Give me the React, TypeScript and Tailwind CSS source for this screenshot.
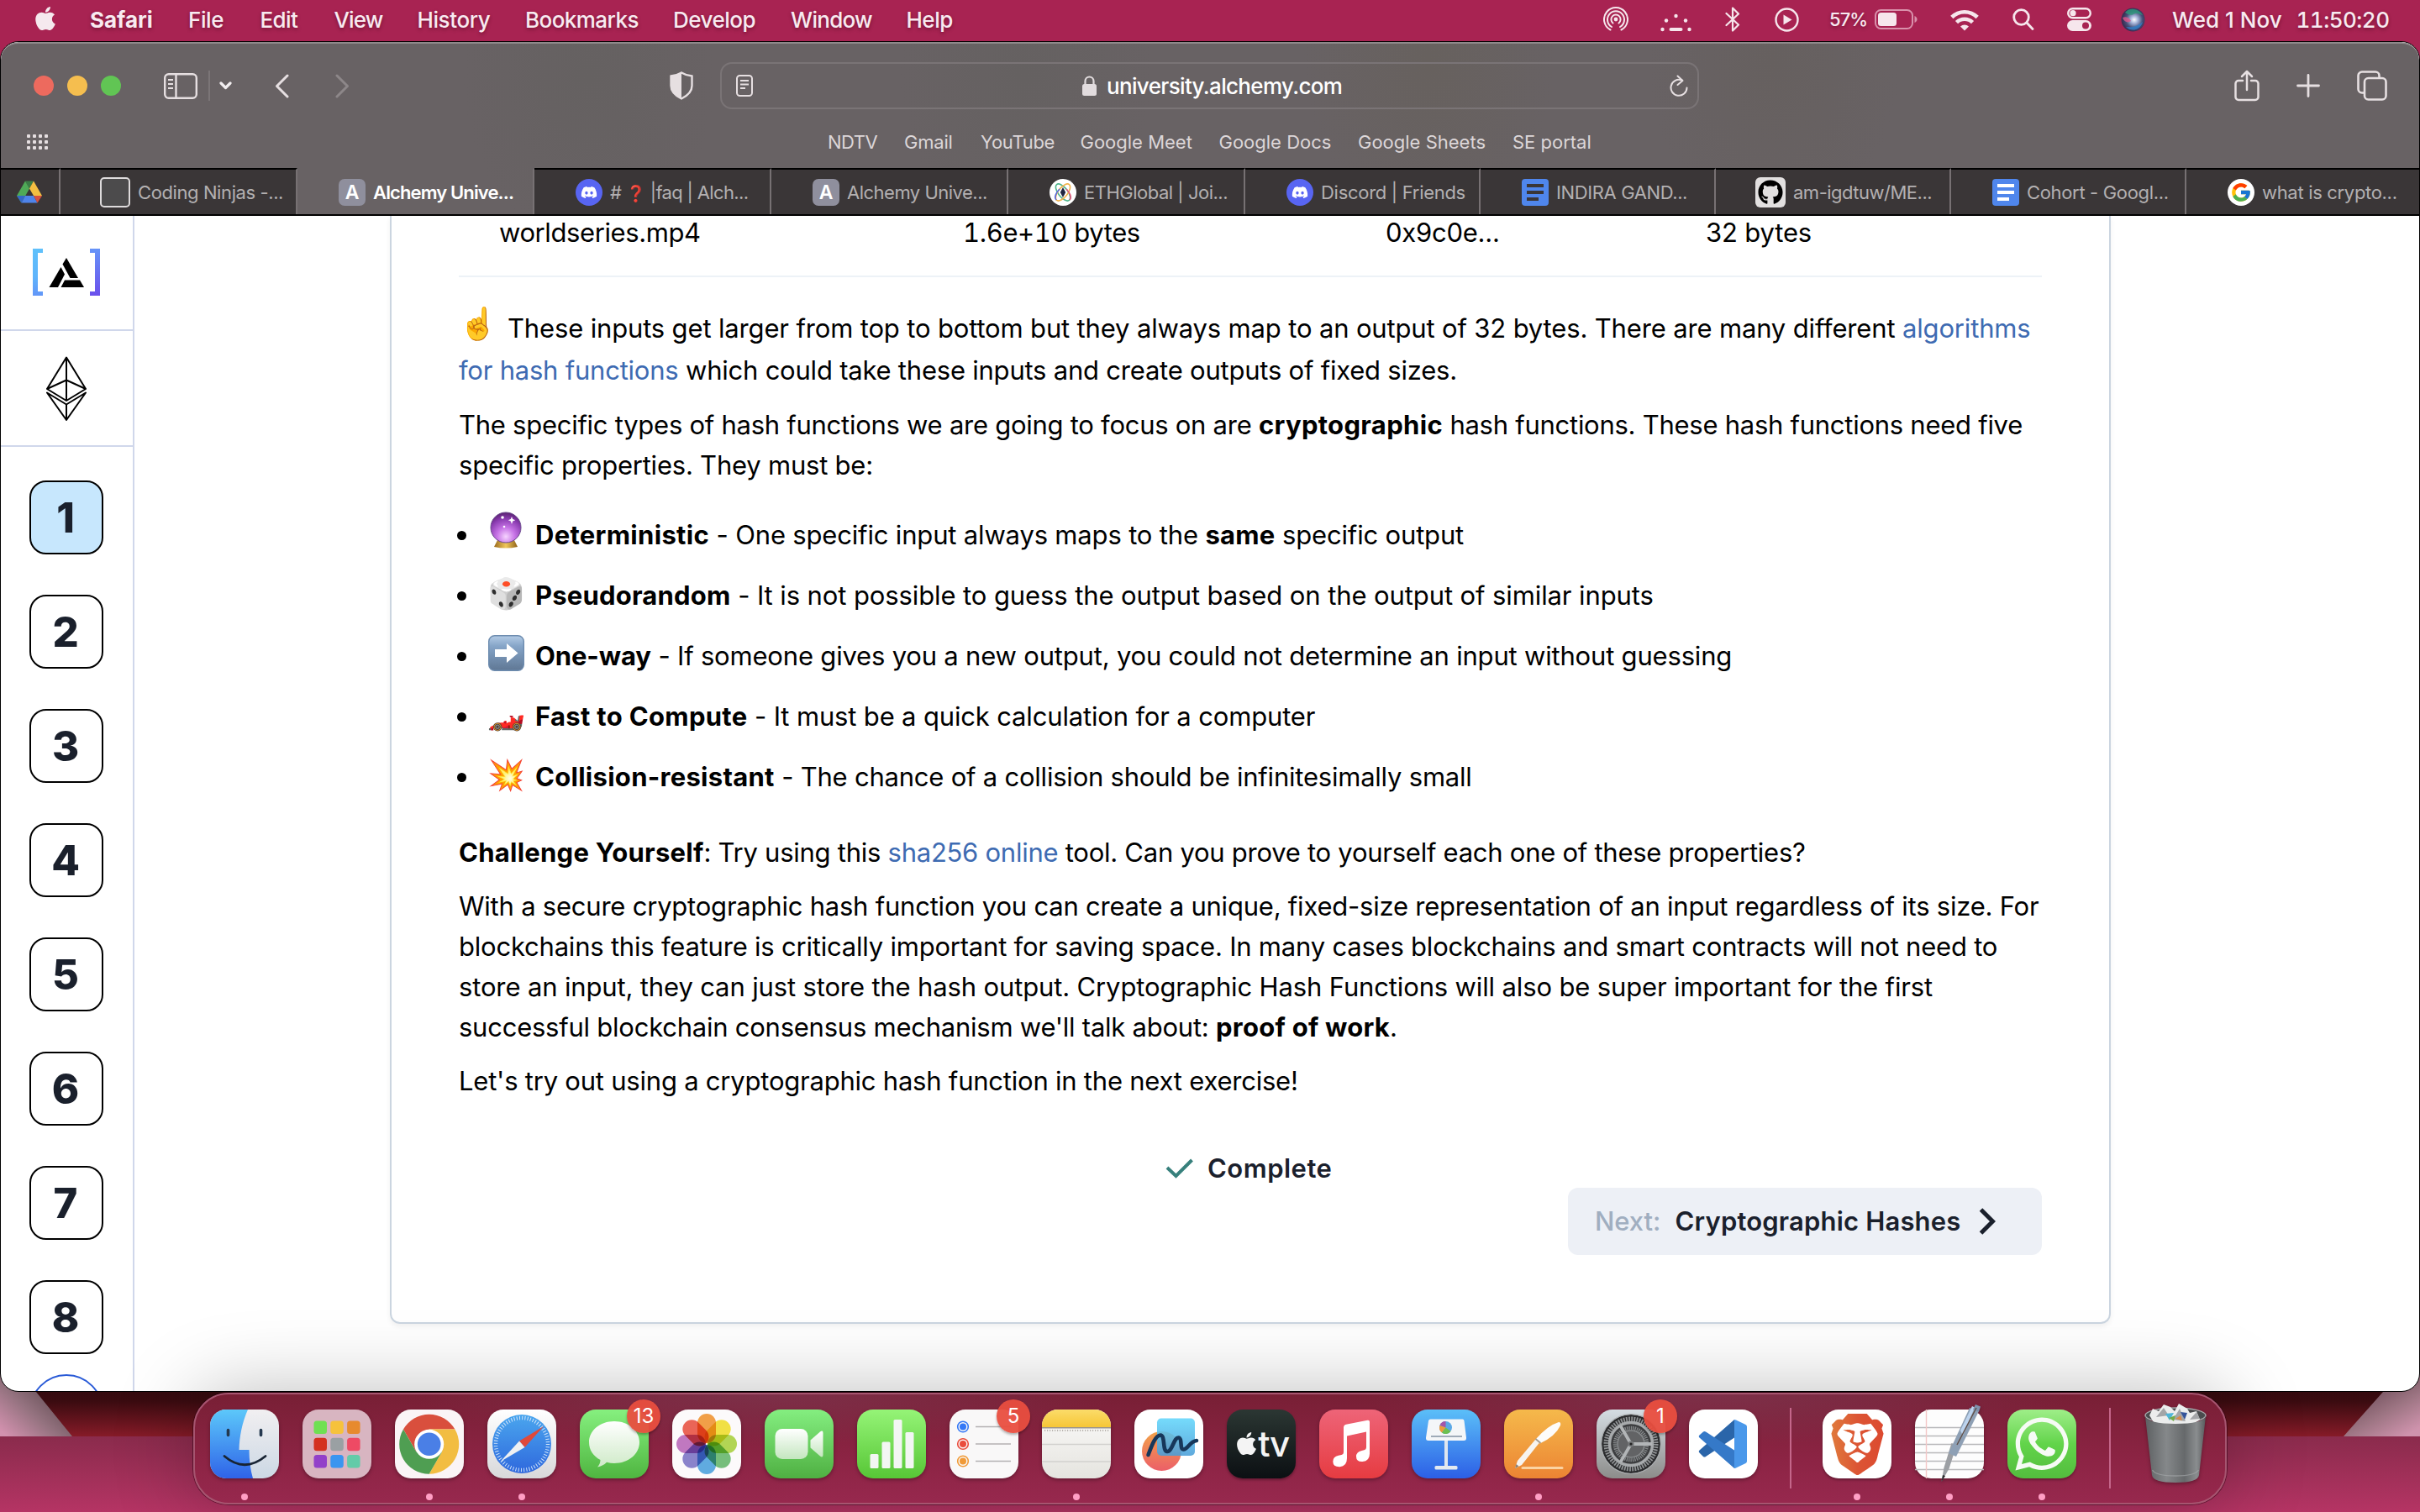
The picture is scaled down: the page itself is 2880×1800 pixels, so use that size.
import React from "react";
import type { ReactNode } from "react";
import { FaApple, FaDiscord, FaGithub, FaWhatsapp } from "react-icons/fa";
import { FcGoogle } from "react-icons/fc";
import { SiBrave } from "react-icons/si";

type Kids = { children?: ReactNode; className?: string };

/* ---------- Menu bar ---------- */

const menus: { label: string; cls: string }[] = [
  { label: "Safari", cls: "w-[117px] font-bold tracking-[0px]" },
  { label: "File", cls: "w-[85.5px] tracking-[-0.4px]" },
  { label: "Edit", cls: "w-[88px] tracking-[-0.6px]" },
  { label: "View", cls: "w-[99px] tracking-[-0.9px]" },
  { label: "History", cls: "w-[128.5px] tracking-[-0.4px]" },
  { label: "Bookmarks", cls: "w-[176px] tracking-[-0.55px]" },
  { label: "Develop", cls: "w-[140px] tracking-[-0.5px]" },
  { label: "Window", cls: "w-[137.5px] tracking-[-0.7px]" },
  { label: "Help", cls: "w-[80px] tracking-[-0.5px]" },
];

function Slot({ children, className = "" }: Kids) {
  return <div className={"flex h-full shrink-0 items-center " + className}>{children}</div>;
}

function MenuBar() {
  return (
    <div className="flex h-[46px] shrink-0 items-center text-[26px] font-medium whitespace-nowrap text-[#f8eaf0] [text-shadow:0_2px_4px_rgba(60,0,25,0.45)]">
      <Slot className="w-[107px] pl-[38px]">
        <FaApple className="mb-[2px] size-[32px] text-[#f5e9ee]" />
      </Slot>
      {menus.map((m) => (
        <span key={m.label} className={"shrink-0 " + m.cls}>
          {m.label}
        </span>
      ))}
      <div className="grow" />
      <Slot className="w-[68px]">
        <svg className="size-[30px]" viewBox="0 0 30 30" fill="none" stroke="#f6e6ec" strokeWidth="2" strokeLinecap="round">
          <circle cx="15" cy="15" r="2.4" fill="#f6e6ec" stroke="none" />
          <path d="M11.5 19.5a5.6 5.6 0 1 1 7 0" />
          <path d="M10 24a10 10 0 1 1 10 0" />
          <path d="M8.500 27.500a14 14 0 1 1 13 0" />
        </svg>
      </Slot>
      <Slot className="w-[77px]">
        <svg className="mt-[8px] h-[22px] w-[37px]" viewBox="0 0 37 22" fill="#f6e6ec">
          <circle cx="18.500" cy="3" r="2.200" />
          <circle cx="7" cy="8.500" r="2.200" />
          <circle cx="30" cy="8.500" r="2.200" />
          <circle cx="2.500" cy="19" r="2.200" />
          <circle cx="34.500" cy="19" r="2.200" />
          <rect x="10.500" y="17" width="16" height="4" rx="2" />
        </svg>
      </Slot>
      <Slot className="w-[59px]">
        <svg className="h-[30px] w-[18px]" viewBox="0 0 18 30" fill="none" stroke="#f6e6ec" strokeWidth="2.200" strokeLinejoin="round" strokeLinecap="round">
          <path d="M1.500 8l14.500 13.500L9 28.500V1.500l7 7L1.500 22" />
        </svg>
      </Slot>
      <Slot className="w-[65px]">
        <svg className="size-[29px]" viewBox="0 0 29 29">
          <circle cx="14.500" cy="14.500" r="13" fill="none" stroke="#f6e6ec" strokeWidth="2.400" />
          <path d="M10.500 8.500v12l10-6z" fill="#f6e6ec" />
        </svg>
      </Slot>
      <Slot className="w-[54px] text-[22px] tracking-[-0.9px]">57%</Slot>
      <Slot className="w-[90px]">
        <svg className="h-[24px] w-[51px]" viewBox="0 0 51 24">
          <rect x="1" y="1" width="44" height="22" rx="6.500" fill="none" stroke="#d991ab" strokeWidth="2" />
          <rect x="4" y="4" width="22" height="16" rx="3.500" fill="#f6e6ec" />
          <path d="M47.500 8v8c4-1.500 4-6.500 0-8z" fill="#d991ab" />
        </svg>
      </Slot>
      <Slot className="w-[74px]">
        <svg className="mt-[2px] h-[26px] w-[34px]" viewBox="0 0 34 26" fill="none" stroke="#f6e6ec" strokeWidth="4.600">
          <path d="M1.800 9.500a21.500 21.500 0 0 1 30.400 0" />
          <path d="M7.500 15.600a13.500 13.500 0 0 1 19 0" />
          <path d="M12 20.500a7.200 7.200 0 0 1 10 0l-5 5z" fill="#f6e6ec" stroke="none" />
        </svg>
      </Slot>
      <Slot className="w-[65px]">
        <svg className="size-[26px]" viewBox="0 0 26 26" fill="none" stroke="#f6e6ec" strokeWidth="2.800" strokeLinecap="round">
          <circle cx="10.500" cy="10.500" r="8.800" />
          <path d="M17 17l7 7.500" />
        </svg>
      </Slot>
      <Slot className="w-[64px]">
        <svg className="h-[28px] w-[29px]" viewBox="0 0 29 28">
          <rect x="1.200" y="1.200" width="26.600" height="11" rx="5.500" fill="none" stroke="#f6e6ec" strokeWidth="2.400" />
          <circle cx="7" cy="6.700" r="3.600" fill="#f6e6ec" />
          <rect x="0" y="15" width="29" height="13" rx="6.500" fill="#f6e6ec" />
          <circle cx="22" cy="21.500" r="4" fill="#a82352" />
        </svg>
      </Slot>
      <Slot className="w-[61px]">
        <svg className="size-[29px]" viewBox="0 0 29 29">
          <defs>
            <radialGradient id="siri" cx="0.55" cy="0.5" r="0.5">
              <stop offset="0" stopColor="#fff" />
              <stop offset="0.3" stopColor="#a9b8dc" />
              <stop offset="0.7" stopColor="#475079" />
              <stop offset="1" stopColor="#3b2f55" />
            </radialGradient>
          </defs>
          <circle cx="14.500" cy="14.500" r="14" fill="url(#siri)" />
          <path d="M5 6C9 0 21 0 26 9c-5-2-9-3-11-1-3 2-7 0-10-2z" fill="#2c9a7c" opacity="0.8" />
          <path d="M2 12c4-2 8 0 10 4-4 3-8 1-10-4z" fill="#e0568c" opacity="0.8" />
          <path d="M6 23c6 1 13 0 20-6-2 9-13 13-20 6z" fill="#2f7fc9" opacity="0.8" />
        </svg>
      </Slot>
      <Slot className="w-[147.500px]">Wed 1 Nov</Slot>
      <Slot className="w-[147.500px] tracking-[-0.500px] tabular-nums">11:50:20</Slot>
    </div>
  );
}

/* ---------- Safari toolbar ---------- */

const favourites: { label: string; cls: string }[] = [
  { label: "NDTV", cls: "w-[91px] tracking-[-0.5px]" },
  { label: "Gmail", cls: "w-[91px] tracking-[-0.2px]" },
  { label: "YouTube", cls: "w-[118.500px] tracking-[-0.3px]" },
  { label: "Google Meet", cls: "w-[165px]" },
  { label: "Google Docs", cls: "w-[165.500px]" },
  { label: "Google Sheets", cls: "w-[184px]" },
  { label: "SE portal", cls: "w-[96px]" },
];

function Toolbar() {
  return (
    <>
      <div className="flex h-[100px] shrink-0 items-center">
        <div className="ml-[39px] flex gap-[16px]">
          <i className="size-[24px] rounded-full bg-[#ed6a5e]" />
          <i className="size-[24px] rounded-full bg-[#f5be4f]" />
          <i className="size-[24px] rounded-full bg-[#61c554]" />
        </div>
        <svg className="ml-[51px] h-[31px] w-[40px]" viewBox="0 0 40 31" fill="none" stroke="#e6dfe1" strokeWidth="2.400">
          <rect x="1.200" y="1.200" width="37.600" height="28.600" rx="4.500" />
          <path d="M14.500 1v29" />
          <path d="M5 8h6M5 13h6M5 18h6" strokeWidth="2" />
        </svg>
        <i className="ml-[13px] h-[36px] w-[2px] bg-[#7b7577]" />
        <svg className="ml-[11px] h-[10px] w-[15px]" viewBox="0 0 15 10" fill="none" stroke="#f2eef0" strokeWidth="3.200" strokeLinecap="round" strokeLinejoin="round">
          <path d="M2 2l5.500 5.500L13 2" />
        </svg>
        <svg className="ml-[51px] h-[29px] w-[17px]" viewBox="0 0 17 29" fill="none" stroke="#e6dfe1" strokeWidth="3" strokeLinecap="round" strokeLinejoin="round">
          <path d="M15 2L2.500 14.500 15 27" />
        </svg>
        <svg className="ml-[55px] h-[29px] w-[17px]" viewBox="0 0 17 29" fill="none" stroke="#8d8789" strokeWidth="3" strokeLinecap="round" strokeLinejoin="round">
          <path d="M2 2l12.500 12.500L2 27" />
        </svg>
        <svg className="ml-[381px] h-[34px] w-[28px]" viewBox="0 0 28 34">
          <path d="M14 1.500c4 2.500 7.500 3.500 12.500 4V17c0 7.500-5.500 12-12.500 15.500C7 29 1.500 24.500 1.500 17V5.500c5-.5 8.500-1.500 12.500-4z" fill="none" stroke="#e6dfe1" strokeWidth="2.400" />
          <path d="M14 1.500v31C7 29 1.500 24.500 1.500 17V5.500c5-.5 8.500-1.500 12.500-4z" fill="#e6dfe1" />
        </svg>
        <div className="ml-[32px] flex h-[56px] w-[1165px] items-center rounded-[14px] border-2 border-[#7a7476] pr-[11px] pl-[17px]">
          <svg className="h-[26px] w-[20px]" viewBox="0 0 20 26" fill="none" stroke="#e6dfe1" strokeWidth="2">
            <rect x="1" y="1" width="18" height="24" rx="3.500" />
            <path d="M5 7h10M5 11.500h10M5 16h6" />
          </svg>
          <svg className="ml-[392px] h-[24px] w-[17px]" viewBox="0 0 17 24">
            <rect x="0" y="10" width="17" height="14" rx="2.500" fill="#e2dcde" />
            <path d="M3.500 11V6.500a5 5 0 0 1 10 0V11" fill="none" stroke="#e2dcde" strokeWidth="2.200" />
          </svg>
          <span className="ml-[12px] grow text-[26px] font-medium tracking-[-0.660px] text-white">university.alchemy.com</span>
          <svg className="h-[26px] w-[22px]" viewBox="0 0 22 26" fill="none" stroke="#e6dfe1" strokeWidth="2" strokeLinecap="round" strokeLinejoin="round">
            <path d="M20.500 15.500a9.500 9.500 0 1 1-6-9" />
            <path d="M9.500 1.500l6 5.500-6 5" />
          </svg>
        </div>
        <svg className="ml-[637px] h-[38px] w-[30px]" viewBox="0 0 30 38" fill="none" stroke="#e6dfe1" strokeWidth="2.500" strokeLinecap="round" strokeLinejoin="round">
          <path d="M10 13H5a3.500 3.500 0 0 0-3.500 3.500v16A3.500 3.500 0 0 0 5 36h20a3.500 3.500 0 0 0 3.500-3.500v-16A3.500 3.500 0 0 0 25 13h-5" />
          <path d="M15 24V2M9 8l6-6 6 6" />
        </svg>
        <svg className="ml-[44px] size-[28px]" viewBox="0 0 28 28" stroke="#e6dfe1" strokeWidth="2.800" strokeLinecap="round">
          <path d="M14 1.500v25M1.500 14h25" />
        </svg>
        <svg className="ml-[44px] h-[36px] w-[36px]" viewBox="0 0 36 36" fill="none" stroke="#e6dfe1" strokeWidth="2.600">
          <rect x="9" y="9" width="25.500" height="25.500" rx="4.500" />
          <path d="M9 26.500H6a4.500 4.500 0 0 1-4.500-4.500V6A4.500 4.500 0 0 1 6 1.500h16A4.500 4.500 0 0 1 26.500 6v3" />
        </svg>
      </div>
      <div className="mb-[14px] flex h-[34px] shrink-0 items-center text-[22px] whitespace-nowrap text-[#dcd6d8]">
        <div className="ml-[31px] grid w-[25px] grid-cols-4 gap-x-[3px] gap-y-[3px]">
          {Array.from({ length: 12 }, (_, i) => (
            <i key={i} className="size-[4px] rounded-[1px] bg-[#e6dfe1]" />
          ))}
        </div>
        <div className="ml-[928px] flex">
          {favourites.map((f) => (
            <span key={f.label} className={f.cls}>
              {f.label}
            </span>
          ))}
        </div>
      </div>
    </>
  );
}

/* ---------- Tabs ---------- */

const DriveIcon = () => (
  <svg className="h-[28px] w-[30px]" viewBox="0 0 30 27">
    <path d="M10 0h10l-5 9z" fill="#3a7d45" />
    <path d="M10 0l5 9L5.500 26 0 17.500z" fill="#4faa57" />
    <path d="M20 0l10 17.500H20L15 9z" fill="#f3bf42" />
    <path d="M10 17.500h10L24.500 26h-19z" fill="#4f84ea" />
    <path d="M20 17.500h10L24.500 26z" fill="#d8513f" />
    <path d="M0 17.500L5.500 26 10 17.500z" fill="#3567c8" />
  </svg>
);

const LetterA = () => (
  <span className="flex size-[32px] items-center justify-center rounded-[7px] bg-[#8f8f9d] text-[23px] font-semibold text-white">A</span>
);

const DiscordIcon = () => (
  <span className="flex size-[32px] items-center justify-center rounded-full bg-[#5865f2] text-white">
    <FaDiscord className="size-[20px]" />
  </span>
);

const DocsIcon = () => (
  <svg className="size-[32px]" viewBox="0 0 32 32">
    <rect width="32" height="32" rx="4" fill="#4f86ec" />
    <path d="M6 8h20M6 16h20M6 24h14" stroke="#3a3637" strokeWidth="4" />
  </svg>
);

const DocsIconLight = () => (
  <svg className="size-[32px]" viewBox="0 0 32 32">
    <rect width="32" height="32" rx="4" fill="#4f86ec" />
    <path d="M6 8h20M6 16h20M6 24h14" stroke="#fff" strokeWidth="4" />
  </svg>
);

const EthGlobalIcon = () => (
  <svg className="size-[32px]" viewBox="0 0 32 32" fill="none" strokeWidth="1.6">
    <circle cx="16" cy="16" r="16" fill="#fff" />
    <ellipse cx="16" cy="16" rx="5.500" ry="12" transform="rotate(-38 16 16)" stroke="#4fb58c" />
    <ellipse cx="16" cy="16" rx="5.500" ry="12" transform="rotate(38 16 16)" stroke="#f0b24a" />
    <path d="M8 25c-3-3 0-9 4-13" stroke="#5468e0" />
    <path d="M24 25c3-3 0-9-4-13" stroke="#e0567a" />
    <path d="M16 10l3.200 6-3.200 6-3.200-6z" fill="#1f2540" />
  </svg>
);

const tabs: { label: ReactNode; icon: ReactNode; cls: string; text?: string; active?: boolean }[] = [
  { label: "Coding Ninjas -...", icon: <span className="-ml-[2px] size-[36px] rounded-[5px] border-2 border-[#dedbdc] bg-[#4c4b4c]" />, cls: "w-[282px]", text: "tracking-[-0.4px]" },
  { label: "Alchemy Unive...", icon: <LetterA />, cls: "w-[282px]", text: "tracking-[-0.87px]", active: true },
  {
    label: (
      <>
        # <span className="text-[19px]">❓</span> |faq | Alch...
      </>
    ),
    icon: <DiscordIcon />,
    cls: "w-[282px]",
    text: "tracking-[-0.65px]",
  },
  { label: "Alchemy Unive...", icon: <LetterA />, cls: "w-[282px]", text: "tracking-[-0.5px]" },
  { label: "ETHGlobal | Joi...", icon: <EthGlobalIcon />, cls: "w-[282px]", text: "tracking-[-0.49px]" },
  { label: "Discord | Friends", icon: <DiscordIcon />, cls: "w-[280px]", text: "tracking-[-0.29px]" },
  { label: "INDIRA GAND...", icon: <DocsIcon />, cls: "w-[280px]", text: "tracking-[-0.38px]" },
  {
    label: "am-igdtuw/ME...",
    icon: (
      <span className="-ml-[2px] flex size-[36px] items-center justify-center rounded-[6px] bg-[#e2e0e0]">
        <FaGithub className="size-[30px] text-black" />
      </span>
    ),
    cls: "w-[280px]",
    text: "tracking-[-0.5px]",
  },
  { label: "Cohort - Googl...", icon: <DocsIconLight />, cls: "w-[280px]", text: "tracking-[-0.34px]" },
  {
    label: "what is crypto...",
    icon: (
      <span className="flex size-[32px] items-center justify-center rounded-full bg-white">
        <FcGoogle className="size-[26px]" />
      </span>
    ),
    cls: "w-[280px]",
    text: "tracking-[-0.32px]",
  },
];

function TabBar() {
  return (
    <div className="flex h-[57px] shrink-0 overflow-hidden border-b-2 border-black text-[22px] whitespace-nowrap">
      <div className="flex w-[71px] shrink-0 items-center border-t-2 border-r-2 border-t-black border-r-[#777173] bg-[#3a3637] pt-[1px] pl-[19px]">
        <DriveIcon />
      </div>
      {tabs.map((t, i) => (
        <div
          key={i}
          className={
            "flex shrink-0 items-center border-t-2 border-r-2 border-r-[#777173] pt-[1px] pl-[49px] " +
            t.cls +
            (t.active ? " border-t-transparent font-semibold text-white" : " border-t-black bg-[#3a3637] text-[#b3b0b1]")
          }
        >
          {t.icon}
          <span className={"ml-[9px] " + (t.text ?? "")}>{t.label}</span>
        </div>
      ))}
    </div>
  );
}

/* ---------- Course sidebar ---------- */

function Sidebar() {
  return (
    <div className="flex w-[160px] shrink-0 flex-col overflow-hidden border-r-2 border-[#d0d7eb]">
      <div className="flex h-[137px] shrink-0 justify-center border-b-2 border-[#d0d7eb] pt-[39px]">
        <svg className="h-[56px] w-[80px]" viewBox="0 0 80 56">
          <defs>
            <linearGradient id="bl" x1="0" y1="0" x2="0" y2="1">
              <stop offset="0" stopColor="#5fc1fb" />
              <stop offset="0.600" stopColor="#5fb4fb" />
              <stop offset="1" stopColor="#6296f8" />
            </linearGradient>
            <linearGradient id="br" x1="0" y1="0" x2="0" y2="1">
              <stop offset="0" stopColor="#6694f8" />
              <stop offset="1" stopColor="#6a4fec" />
            </linearGradient>
          </defs>
          <path d="M0 0h12v5H6v46h6v5H0z" fill="url(#bl)" />
          <path d="M80 0H68v5h6v46h-6v5h12z" fill="url(#br)" />
          <path d="M40 11l14 24H44.500L35.500 18.500z" fill="#000" />
          <path d="M33.500 22l4.500 8.500-8 15.500H19.500z" fill="#000" />
          <path d="M38 37.500h18l5 8.500H33.500z" fill="#000" />
        </svg>
      </div>
      <div className="flex h-[138px] shrink-0 justify-center border-b-2 border-[#d0d7eb] pt-[30px]">
        <svg className="h-[77px] w-[48px]" viewBox="0 0 48 77" fill="none" stroke="#000" strokeWidth="2" strokeLinejoin="round">
          <path d="M24 1.500L47 39 24 53 1 39z" />
          <path d="M24 1.500V53M1 39l23-10.500L47 39" />
          <path d="M1 43.500L24 57.500l23-14L24 76z" />
          <path d="M24 57.500V76" />
        </svg>
      </div>
      <div className="flex flex-col items-center gap-[48px] pt-[40px]">
        {[1, 2, 3, 4, 5, 6, 7, 8].map((n) => (
          <div
            key={n}
            className={
              "flex size-[88px] shrink-0 items-center justify-center rounded-[20px] border-2 border-black pt-[2px] pr-[2px] text-[49px] font-extrabold text-[#1a202c] " +
              (n === 1 ? "bg-[#c7e7fd]" : "bg-white")
            }
          >
            {n}
          </div>
        ))}
      </div>
      <div className="mt-[24px] size-[88px] shrink-0 self-center rounded-full border-2 border-[#2a5bd7]" />
    </div>
  );
}

/* ---------- Lesson ---------- */

const Crystal = () => (
  <svg className="mb-[12px] h-[44px] w-[38px]" viewBox="0 0 38 44">
    <defs>
      <radialGradient id="orb" cx="0.5" cy="0.800" r="0.850">
        <stop offset="0" stopColor="#f6d4ff" />
        <stop offset="0.350" stopColor="#c774e6" />
        <stop offset="0.700" stopColor="#8a3bb0" />
        <stop offset="1" stopColor="#4d1a5f" />
      </radialGradient>
      <linearGradient id="orbBase">
        <stop offset="0" stopColor="#9a6a1c" />
        <stop offset="0.500" stopColor="#f0c75a" />
        <stop offset="1" stopColor="#8f6218" />
      </linearGradient>
    </defs>
    <path d="M9 34h20l4 8q-14 3-28 0z" fill="url(#orbBase)" />
    <circle cx="19" cy="19" r="18" fill="url(#orb)" stroke="#6a4a8c" strokeWidth="1" />
    <circle cx="15" cy="7" r="1.800" fill="#fff" />
    <path d="M26 6l1.200 3 3 1.200-3 1.200L26 15l-1.200-3.600-3-1.200 3-1.200z" fill="#fff" />
    <circle cx="17" cy="18" r="1.300" fill="#fff" />
  </svg>
);

const ArrowTile = () => (
  <svg className="mb-[8px] size-[43px]" viewBox="0 0 43 43">
    <defs>
      <linearGradient id="tile" x1="0" y1="0" x2="0" y2="1">
        <stop offset="0" stopColor="#b4cce6" />
        <stop offset="0.300" stopColor="#86a5c8" />
        <stop offset="1" stopColor="#5f7794" />
      </linearGradient>
    </defs>
    <rect x="0.700" y="0.700" width="41.600" height="41.600" rx="7" fill="url(#tile)" stroke="#6d8caf" strokeWidth="1.400" />
    <path d="M8 17h14v-7l13.500 11.500L22 33v-7H8z" fill="#fff" />
  </svg>
);

const Bold = ({ children, className = "" }: Kids) => <b className={"font-bold tracking-[0.250px] " + className}>{children}</b>;
const Link = ({ children }: Kids) => <a className="text-[#3e6bb2]">{children}</a>;
const Line = ({ children, className = "tracking-[-0.220px]" }: Kids) => <span className={"block " + className}>{children}</span>;

const properties: { icon: ReactNode; name: string; name_cls: string; text: ReactNode; cls: string }[] = [
  {
    icon: <Crystal />,
    name: "Deterministic",
    name_cls: "tracking-[0.310px]",
    cls: "tracking-[-0.170px]",
    text: (
      <>
        - One specific input always maps to the <Bold className="tracking-[0.1px]">same</Bold> specific output
      </>
    ),
  },
  { icon: <span className="mb-[6px]">🎲</span>, name: "Pseudorandom", name_cls: "tracking-[0.200px]", cls: "tracking-[-0.100px]", text: "- It is not possible to guess the output based on the output of similar inputs" },
  { icon: <ArrowTile />, name: "One-way", name_cls: "tracking-[-0.100px]", cls: "tracking-[-0.190px]", text: "- If someone gives you a new output, you could not determine an input without guessing" },
  { icon: <span className="mb-[6px]">🏎️</span>, name: "Fast to Compute", name_cls: "tracking-[0.320px]", cls: "tracking-[-0.160px]", text: "- It must be a quick calculation for a computer" },
  { icon: <span className="mb-[6px]">💥</span>, name: "Collision-resistant", name_cls: "tracking-[0.280px]", cls: "tracking-[-0.220px]", text: "- The chance of a collision should be infinitesimally small" },
];

function Lesson() {
  return (
    <div className="ml-[304px] flex h-[1319px] w-[2048px] shrink-0 flex-col rounded-b-[12px] border-2 border-t-0 border-[#cbd5e0] px-[80px] text-[31px] leading-[48px] whitespace-nowrap text-black shadow-[0_3px_6px_rgba(0,0,0,0.06)]">
      <div className="-mt-[5px] grid h-[78px] shrink-0 grid-cols-[552px_503px_381px_1fr] border-b-2 border-[#edf2f7] pt-[1px] pl-[48px]">
        <span className="tracking-[-0.400px]">worldseries.mp4</span>
        <span className="tracking-[-0.380px] tabular-nums">1.6e+10 bytes</span>
        <span className="tracking-[-0.250px]">0x9c0e...</span>
        <span className="tracking-[-0.160px]">32 bytes</span>
      </div>
      <p className="mt-[36px] leading-[50px]">
        <span className="flex tracking-[-0.155px]">
          <span className="-mt-[6px] inline-block w-[58px] text-[37px] tracking-normal">☝️</span>
          <span>
            These inputs get larger from top to bottom but they always map to an output of 32 bytes. There are many different <Link>algorithms</Link>
          </span>
        </span>
        <Line>
          <Link>for hash functions</Link> which could take these inputs and create outputs of fixed sizes.
        </Line>
      </p>
      <p className="mt-[16px]">
        <Line className="tracking-[-0.265px]">
          The specific types of hash functions we are going to focus on are <Bold className="tracking-[0.320px]">cryptographic</Bold> hash functions. These hash functions need five
        </Line>
        <Line>specific properties. They must be:</Line>
      </p>
      <ul className="mt-[35px] flex flex-col gap-[24px]">
        {properties.map((p) => (
          <li key={p.name} className="flex h-[48px] items-center">
            <i className="-ml-[2px] size-[11px] rounded-full bg-black" />
            <span className="mr-[11px] ml-[23px] flex w-[48px] items-center justify-center text-[36px]">{p.icon}</span>
            <span className={p.cls}>
              <b className={"font-bold " + p.name_cls}>{p.name}</b> {p.text}
            </span>
          </li>
        ))}
      </ul>
      <p className="mt-[42px]">
        <Line className="tracking-[-0.260px]">
          <Bold className="tracking-[0.120px]">Challenge Yourself</Bold>: Try using this <Link>sha256 online</Link> tool. Can you prove to yourself each one of these properties?
        </Line>
      </p>
      <p className="mt-[16px]">
        <Line>With a secure cryptographic hash function you can create a unique, fixed-size representation of an input regardless of its size. For</Line>
        <Line className="tracking-[-0.210px]">blockchains this feature is critically important for saving space. In many cases blockchains and smart contracts will not need to</Line>
        <Line className="tracking-[-0.140px]">store an input, they can just store the hash output. Cryptographic Hash Functions will also be super important for the first</Line>
        <Line className="tracking-[-0.240px]">
          successful blockchain consensus mechanism we'll talk about: <Bold>proof of work</Bold>.
        </Line>
      </p>
      <p className="mt-[16px]">
        <Line>Let's try out using a cryptographic hash function in the next exercise!</Line>
      </p>
      <div className="mt-[56px] flex items-center pl-[841px] font-semibold text-[#1a202c]">
        <svg className="mr-[16px] h-[24px] w-[34px]" viewBox="0 0 34 24" fill="none" stroke="#37807c" strokeWidth="4">
          <path d="M2 11l10.500 10L31.500 2" />
        </svg>
        <span className="tracking-[0.500px]">Complete</span>
      </div>
      <div className="-mt-[1px] flex h-[80px] w-[564px] items-center self-end rounded-[12px] bg-[#edf0f6] pl-[32px] font-semibold">
        <span className="w-[95.500px] font-medium tracking-[-0.100px] text-[#a0aec0]">Next:</span>
        <span className="tracking-[0.170px] text-[#1a202c]">Cryptographic Hashes</span>
        <svg className="ml-[22px] h-[32px] w-[20px]" viewBox="0 0 20 32" fill="none" stroke="#1a202c" strokeWidth="5">
          <path d="M2.500 2l14 14-14 14" />
        </svg>
      </div>
    </div>
  );
}

/* ---------- Dock ---------- */

const g = (id: string, a: string, b: string) => (
  <linearGradient id={id} x1="0" y1="0" x2="0" y2="1">
    <stop offset="0" stopColor={a} />
    <stop offset="1" stopColor={b} />
  </linearGradient>
);

function Tile({ children, fill }: { children?: ReactNode; fill: string }) {
  return (
    <svg className="size-[82px] overflow-visible drop-shadow-[0_2px_2px_rgba(0,0,0,0.3)]" viewBox="0 0 82 82">
      <rect width="82" height="82" rx="19" fill={fill} />
      {children}
    </svg>
  );
}

const Finder = () => (
  <Tile fill="url(#fdR)">
    <defs>
      {g("fdL", "#5cc8fa", "#2f63e8")}
      {g("fdR", "#f1eff1", "#ccd8e4")}
    </defs>
    <path d="M19 0H45C38 16 35 32 34.500 48H46.500C46.500 60 48 72 51 82H19A19 19 0 0 1 0 63V19A19 19 0 0 1 19 0z" fill="url(#fdL)" />
    <path d="M21.500 24.500v6M60.500 24.500v6" stroke="#24384f" strokeWidth="3.600" strokeLinecap="round" />
    <path d="M17 55.500Q41 76 66 55.500" fill="none" stroke="#182433" strokeWidth="2.800" strokeLinecap="round" />
  </Tile>
);

const padColors = ["#6fe052", "#f6c23c", "#e78a2e", "#d4301f", "#9aa0a3", "#ee4a64", "#9240c9", "#3a95f0", "#63cba8"];
const Launchpad = () => (
  <Tile fill="#d8b5c1">
    {padColors.map((c, i) => (
      <rect key={c} x={13.500 + (i % 3) * 19.800} y={13.500 + Math.floor(i / 3) * 20.200} width="15.500" height="15.500" rx="3.500" fill={c} />
    ))}
  </Tile>
);

const Chrome = () => (
  <Tile fill="#faf4f6">
    <path d="M10 23.500A35.500 35.500 0 0 1 71.400 23.500H40.700L25.300 50.200z" fill="#d94f3d" />
    <path d="M71.400 23.500A35.500 35.500 0 0 1 40.700 76.800L56 50.200 40.700 23.500z" fill="#f2bd42" />
    <path d="M40.700 76.800A35.500 35.500 0 0 1 10 23.500L25.300 50.200H56z" fill="#4f9e52" />
    <circle cx="40.700" cy="41.300" r="17.500" fill="#fff" />
    <circle cx="40.700" cy="41.300" r="13.800" fill="#4a7fe6" />
  </Tile>
);

const Safari = () => (
  <Tile fill="url(#sfB)">
    <defs>
      {g("sfB", "#ffffff", "#d8d8da")}
      {g("sfC", "#4aa6ee", "#2f68dd")}
    </defs>
    <circle cx="41" cy="41" r="35" fill="url(#sfC)" />
    <circle cx="41" cy="41" r="31" fill="none" stroke="#cfe4fa" strokeWidth="4.500" strokeDasharray="1 2.246" />
    <path d="M67 20L44.500 45 38 37.500z" fill="#e0493b" />
    <path d="M15.500 62L38 37.500l6.500 7.500z" fill="#eef0f3" />
  </Tile>
);

const Messages = () => (
  <Tile fill="url(#msB)">
    <defs>
      {g("msB", "#86f07f", "#4fb540")}
      {g("msW", "#ffffff", "#cfeac8")}
    </defs>
    <path d="M41 14c17 0 30 11 30 25S58 64 41 64c-3 0-6-.4-9-1.200C29 66 25 68 21 68.500c2-2 3.500-5 3.500-8.500C16 55.500 11 48 11 39c0-14 13-25 30-25z" fill="url(#msW)" />
  </Tile>
);

const petals = ["#f0922e", "#f0dc2a", "#a8d03c", "#63b56a", "#4a9fdc", "#7a72c4", "#b865b8", "#e8503f"];
const Photos = () => (
  <Tile fill="#fcfafb">
    <g style={{ isolation: "isolate" }}>
      {petals.map((c, i) => (
        <rect key={c} x="30" y="5" width="22" height="35" rx="11" fill={c} opacity="0.880" transform={`rotate(${i * 45} 41 41)`} className="mix-blend-multiply" />
      ))}
    </g>
  </Tile>
);

const FaceTime = () => (
  <Tile fill="url(#ftB)">
    <defs>
      {g("ftB", "#84ee80", "#4fb042")}
      {g("ftW", "#ffffff", "#c4e6bf")}
    </defs>
    <rect x="12.500" y="23" width="39" height="36" rx="8.500" fill="url(#ftW)" />
    <path d="M54.500 36.500L66 26.500q3.500-2.500 3.500 1.500v26q0 4-3.500 1.500l-11.500-10z" fill="url(#ftW)" />
  </Tile>
);

const Numbers = () => (
  <Tile fill="url(#nbB)">
    <defs>{g("nbB", "#95f477", "#57c636")}</defs>
    <rect x="15.500" y="53" width="10" height="17" rx="1.500" fill="#f3f6f3" />
    <rect x="29.500" y="38.500" width="10" height="31.500" rx="1.500" fill="#f3f6f3" />
    <rect x="43.500" y="12" width="10" height="58" rx="1.500" fill="#f3f6f3" />
    <rect x="57.500" y="27" width="10" height="43" rx="1.500" fill="#f3f6f3" />
  </Tile>
);

const Reminders = () => (
  <Tile fill="#f9f8f8">
    {["#3478f6", "#ea4d3d", "#f09a37"].map((c, i) => (
      <g key={c}>
        <circle cx="16" cy={20.500 + i * 20.500} r="6.300" fill="none" stroke={c} strokeWidth="1.600" />
        <circle cx="16" cy={20.500 + i * 20.500} r="4" fill={c} />
        <path d={`M31 ${20.500 + i * 20.500}h42`} stroke="#b4b1b2" strokeWidth="1.400" />
      </g>
    ))}
  </Tile>
);

const Notes = () => (
  <Tile fill="url(#ntB)">
    <defs>
      {g("ntB", "#fbfaf9", "#e5e4df")}
      {g("ntY", "#fbdc6a", "#f6c637")}
    </defs>
    <path d="M0 21V19A19 19 0 0 1 19 0H63A19 19 0 0 1 82 19V21z" fill="url(#ntY)" />
    <path d="M0 21.800h82" stroke="#9a948c" strokeWidth="1.600" />
    <path d="M3 25h77" stroke="#b9b5b0" strokeWidth="2" strokeDasharray="1.200 1.800" />
    <path d="M0 41.500h82M0 62h82" stroke="#d2d1ce" strokeWidth="1.400" />
  </Tile>
);

const Freeform = () => (
  <Tile fill="#ffffff">
    <defs>
      {g("ffO", "#f2a24a", "#ec5f68")}
      {g("ffC", "#62d6fb", "#4a9ed8")}
    </defs>
    <circle cx="32.500" cy="49.500" r="23.500" fill="url(#ffO)" />
    <rect x="27" y="10.500" width="45" height="44.500" rx="5" fill="url(#ffC)" opacity="0.880" />
    <path d="M16.500 54C21 42 25 31 31 30.500c6 0 2 19 8 19.500s8-17 13.500-16.500c5 .5 1 14 6 14S66 38 74 37" fill="none" stroke="#17375a" strokeWidth="4.600" strokeLinecap="round" />
  </Tile>
);

const AppleTV = () => (
  <div className="flex size-[82px] items-center justify-center rounded-[19px] bg-linear-to-b from-[#2b3733] to-[#0c1013] text-[42px] leading-none font-medium text-[#f4f4f4] shadow-[0_2px_3px_rgba(0,0,0,0.3)]">
    <FaApple className="mb-[2px] size-[31px] shrink-0" />
    <span className="-ml-[2px] tracking-[-1.5px]">tv</span>
  </div>
);

const Music = () => (
  <Tile fill="url(#muB)">
    <defs>{g("muB", "#ee6478", "#e63b41")}</defs>
    <path d="M29 21.500q0-3 3-3.800l25.500-5q2.500-.4 2.500 2V52.500q0 9-8.500 9.500-7.500.3-7.500-6 0-5.500 6.500-7l3-.7q2.500-.6 2.500-3V26.500L33 31.500V58q0 9.500-8.500 10.200-8 .3-8.200-6.200 0-5.800 6.500-7.200l3.700-.9q2.500-.6 2.500-3z" fill="#fff" />
  </Tile>
);

const Keynote = () => (
  <Tile fill="url(#knB)">
    <defs>{g("knB", "#5bbff8", "#2c5fe6")}</defs>
    <path d="M39 36h4v32h-4z" fill="#dfe6ef" />
    <rect x="27.500" y="67" width="27" height="4.500" rx="1.500" fill="#e4e9f0" />
    <path d="M22.500 11.500h38q1.800 0 2 2L65 33.500q.3 3.500-3 3.500H20q-3.300 0-3-3.500l3-20q.4-2 2.500-2z" fill="#f4f6f8" />
    <path d="M23 32h37" stroke="#9fabb8" strokeWidth="1.800" />
    <circle cx="40.500" cy="21.500" r="7.500" fill="#5aa8e6" />
    <path d="M40.500 21.500v-7.500a7.500 7.500 0 0 0-7 5z" fill="#a455a8" />
    <path d="M40.500 21.500l-7-2.500a7.500 7.500 0 0 0 2.500 8.500z" fill="#ee9a3a" />
    <path d="M40.500 21.500l-4.500 6a7.500 7.500 0 0 0 10.500-1.500z" fill="#6cc04f" />
  </Tile>
);

const Pages = () => (
  <Tile fill="url(#pgB)">
    <defs>{g("pgB", "#f5b94b", "#ec8433")}</defs>
    <path d="M22 69.500h47" stroke="#fbd3a2" strokeWidth="3" strokeLinecap="round" />
    <path d="M13 70l3-9L37 36q3-1.500 5 3.500L21 66z" fill="#f7f4f0" />
    <path d="M38 35Q52 19 65 15q3 0 2 4-6 13-24.500 21.500z" fill="#fdfcfa" />
    <path d="M37.500 35l6 5" stroke="#a49b8f" strokeWidth="1.800" />
    <path d="M13 70l1.500-5 3 2.500z" fill="#8b8177" />
  </Tile>
);

const Settings = () => (
  <Tile fill="url(#stB)">
    <defs>{g("stB", "#d5dde3", "#8c8c8a")}</defs>
    <circle cx="41" cy="41" r="35" fill="#2b2c2e" />
    <circle cx="41" cy="41" r="35.500" fill="none" stroke="#a9acae" strokeWidth="1.200" />
    <circle cx="41" cy="41" r="29.500" fill="none" stroke="#8f9294" strokeWidth="6" strokeDasharray="1.800 1.290" />
    <circle cx="41" cy="41" r="25.500" fill="#3c3d3f" stroke="#a7aaac" strokeWidth="3.400" />
    <circle cx="41" cy="41" r="19" fill="none" stroke="#838688" strokeWidth="4.500" strokeDasharray="1.400 1" />
    <circle cx="41" cy="41" r="16" fill="#626365" stroke="#8a8d8f" strokeWidth="1.500" />
    <g stroke="#b2b5b7" strokeWidth="3.800">
      <path d="M41 41h25M41 41L28.500 19.400M41 41L28.500 62.600" />
    </g>
    <circle cx="41" cy="41" r="3.600" fill="#77797b" />
    <circle cx="41" cy="41" r="1.600" fill="#222" />
  </Tile>
);

const VSCode = () => (
  <Tile fill="#ffffff">
    <path d="M54 12v21.500L20 56q-1.500 1-3 0l-4.500-4.500q-1.500-1.500 0-3z" fill="#2a65a9" />
    <path d="M54 70V48.500L20 26.500q-1.500-1-3 0l-4.500 4q-1.500 1.500 0 3z" fill="#3579c8" />
    <path d="M54 12q1 0 2 .5L67.500 18q1.500.8 1.500 2.500v41q0 1.700-1.500 2.500L56 69.500q-1 .5-2 .5z" fill="#4a98ea" />
  </Tile>
);

const Brave = () => (
  <div className="flex size-[82px] items-center justify-center rounded-[19px] bg-white shadow-[0_2px_3px_rgba(0,0,0,0.3)]">
    <svg className="absolute size-0">
      <defs>
        <linearGradient id="brv">
          <stop offset="0" stopColor="#e07a3c" />
          <stop offset="0.500" stopColor="#dc5534" />
          <stop offset="1" stopColor="#dc4a30" />
        </linearGradient>
      </defs>
    </svg>
    <SiBrave className="size-[73px] fill-[url(#brv)]" />
  </div>
);

const TextEdit = () => (
  <Tile fill="#fdfdfd">
    <path d="M0 21.500h82M0 31.500h82M0 41.500h82M0 51.500h82M0 61.500h82M0 71.500h82" stroke="#b9b9bb" strokeWidth="1.400" />
    <path d="M13.500 0v82" stroke="#f3c7c7" strokeWidth="1.400" />
    <path d="M31.500 86l3-17 9-29 6 2.500-9 28z" fill="#9c9fa4" />
    <path d="M40 52L65-2l11 4-27 54z" fill="#8ea0b5" />
    <path d="M54 25L68-4l3 1.500L57 31z" fill="#bcd3ee" />
    <path d="M72-6l6 2.500-2 6-7-2.500z" fill="#7f93ad" />
    <path d="M50 42L73-2" stroke="#5f4c44" strokeWidth="1.400" />
    <path d="M31.500 86l1.500-8 3 1z" fill="#2c2c2e" />
  </Tile>
);

const WhatsApp = () => (
  <div className="flex size-[82px] items-center justify-center rounded-[19px] bg-linear-to-b from-[#9eee88] via-[#62d44a] to-[#53bd3e] shadow-[0_2px_3px_rgba(0,0,0,0.3)]">
    <FaWhatsapp className="size-[72px] text-[#f6fbf5]" />
  </div>
);

const Trash = () => (
  <svg className="-mt-[8px] h-[96px] w-[74px] drop-shadow-[0_2px_2px_rgba(0,0,0,0.3)]" viewBox="0 0 74 96">
    <defs>
      <linearGradient id="trB">
        <stop offset="0" stopColor="#5d6062" />
        <stop offset="0.350" stopColor="#85888a" />
        <stop offset="0.650" stopColor="#66696b" />
        <stop offset="0.850" stopColor="#8a8d8f" />
        <stop offset="1" stopColor="#56595b" />
      </linearGradient>
    </defs>
    <ellipse cx="37" cy="15" rx="36" ry="9" fill="#4a4c4e" stroke="#a6a9ab" strokeWidth="1.500" />
    <path d="M6 15l4-8 7 3 6-8 8 3 5 5 5-9 10 6 3 5 8-2 4 10-12 8H14z" fill="#eceded" />
    <path d="M14 17l9-11 6 9zM34 20l8-13 7 15zM54 20l8-9 4 8z" fill="#a3a5a8" />
    <path d="M25 13l10-1-5 9z" fill="#4fb6d8" />
    <path d="M43 11l8 1-3 8z" fill="#34549a" />
    <path d="M29 18l8-3-2 7z" fill="#74a94a" />
    <path d="M37 19l6-4 2 6z" fill="#d9884a" />
    <path d="M1 16q4 9 36 9t36-9L65 86q-1 9-28 9T9 86z" fill="url(#trB)" />
    <path d="M9.500 80q4 7 27.500 7t27.500-7" fill="none" stroke="#a8abad" strokeWidth="1.400" opacity="0.600" />
  </svg>
);

type App = { icon: ReactNode; dot?: boolean; badge?: string };
const left: App[] = [
  { icon: <Finder />, dot: true },
  { icon: <Launchpad /> },
  { icon: <Chrome />, dot: true },
  { icon: <Safari />, dot: true },
  { icon: <Messages />, badge: "13" },
  { icon: <Photos /> },
  { icon: <FaceTime /> },
  { icon: <Numbers /> },
  { icon: <Reminders />, badge: "5" },
  { icon: <Notes />, dot: true },
  { icon: <Freeform /> },
  { icon: <AppleTV /> },
  { icon: <Music /> },
  { icon: <Keynote /> },
  { icon: <Pages />, dot: true },
  { icon: <Settings />, badge: "1" },
  { icon: <VSCode /> },
];
const right: App[] = [
  { icon: <Brave />, dot: true },
  { icon: <TextEdit />, dot: true },
  { icon: <WhatsApp />, dot: true },
];

const DockItem = ({ app }: { app: App }) => (
  <div className="relative flex h-[108px] w-[82px] shrink-0 flex-col items-center justify-between">
    {app.icon}
    {app.dot && <i className="size-[8px] rounded-full bg-[#ff9fc5]" />}
    {app.badge && (
      <span className="absolute -top-[12px] -right-[14px] flex size-[40px] items-center justify-center rounded-full bg-[#e94e3f]/95 text-[24px] text-white shadow-[0_2px_3px_rgba(0,0,0,0.3)]">
        {app.badge}
      </span>
    )}
  </div>
);

const Divider = ({ className = "" }: Kids) => <i className={"-mt-[2px] h-[96px] w-[2px] shrink-0 bg-[#c4668a] " + className} />;

function Dock() {
  return (
    <div className="relative mt-[1px] ml-[230px] flex h-[133px] w-[2420px] shrink-0 items-start rounded-[42px] border-2 border-[#a65570] bg-[radial-gradient(ellipse_420px_60px_at_28%_0%,#7f3852aa,transparent),radial-gradient(ellipse_420px_60px_at_75%_0%,#7f3852aa,transparent),linear-gradient(to_bottom,#781f35,#8c2444_60%,#97284e)] pt-[18px] pl-[18px] shadow-[0_0_0_1px_rgba(40,0,15,0.5),0_0_95px_rgba(0,0,0,0.27)]">
      <div className="flex gap-[28px]">
        {left.map((a, i) => (
          <DockItem key={i} app={a} />
        ))}
      </div>
      <Divider className="ml-[38px]" />
      <div className="ml-[37px] flex gap-[28px]">
        {right.map((a, i) => (
          <DockItem key={i} app={a} />
        ))}
      </div>
      <Divider className="ml-[39px]" />
      <div className="ml-[40px]">
        <Trash />
      </div>
    </div>
  );
}

/* ---------- Desktop ---------- */

const Wallpaper = () => (
  <svg className="absolute bottom-0 left-0 h-[180px] w-full" viewBox="0 0 2880 180">
    <defs>
      <linearGradient id="wpDark" x1="0" y1="0.150" x2="0" y2="1">
        <stop offset="0" stopColor="#2a080c" />
        <stop offset="0.450" stopColor="#3a0b10" />
        <stop offset="1" stopColor="#861b28" />
      </linearGradient>
      <linearGradient id="wpPinkL" x1="0.7" y1="0.3" x2="0.1" y2="1">
        <stop offset="0" stopColor="#5f4a50" />
        <stop offset="0.500" stopColor="#94727f" />
        <stop offset="1" stopColor="#d291ae" />
      </linearGradient>
      <linearGradient id="wpPinkR" x1="0.4" y1="0.3" x2="0.8" y2="1">
        <stop offset="0" stopColor="#6d4c58" />
        <stop offset="0.500" stopColor="#9c7482" />
        <stop offset="1" stopColor="#cf93ad" />
      </linearGradient>
      <linearGradient id="wpLow" x1="0" y1="0" x2="0" y2="1">
        <stop offset="0" stopColor="#8a2b4c" />
        <stop offset="1" stopColor="#b53464" />
      </linearGradient>
    </defs>
    <rect width="2880" height="90" fill="url(#wpDark)" />
    <path d="M0 0h22L43 37 86 90H0z" fill="url(#wpPinkL)" />
    <path d="M2880 0h-25l-19 37-47 53h91z" fill="url(#wpPinkR)" />
    <rect y="90" width="2880" height="90" fill="url(#wpLow)" />
  </svg>
);

export default function App() {
  return (
    <div className="relative flex h-[1800px] w-[2880px] flex-col overflow-hidden bg-[#a82352] font-['Inter','Liberation_Sans',sans-serif]">
      <Wallpaper />
      <MenuBar />
      <div className="relative mt-[3px] flex h-[1608px] shrink-0 flex-col overflow-hidden rounded-[22px] border border-black bg-white">
        <div className="flex shrink-0 flex-col rounded-t-[21px] border-t-2 border-[#8f898b] bg-[#686264] bg-[radial-gradient(ellipse_150px_200px_at_700px_40px,#656161,transparent),radial-gradient(ellipse_150px_200px_at_1220px_40px,#656161,transparent),radial-gradient(ellipse_150px_200px_at_1700px_20px,#67615e,transparent),radial-gradient(ellipse_150px_200px_at_2110px_20px,#66605f,transparent)]">
          <Toolbar />
          <TabBar />
        </div>
        <div className="-ml-[1px] flex grow overflow-hidden">
          <Sidebar />
          <Lesson />
        </div>
      </div>
      <Dock />
    </div>
  );
}
